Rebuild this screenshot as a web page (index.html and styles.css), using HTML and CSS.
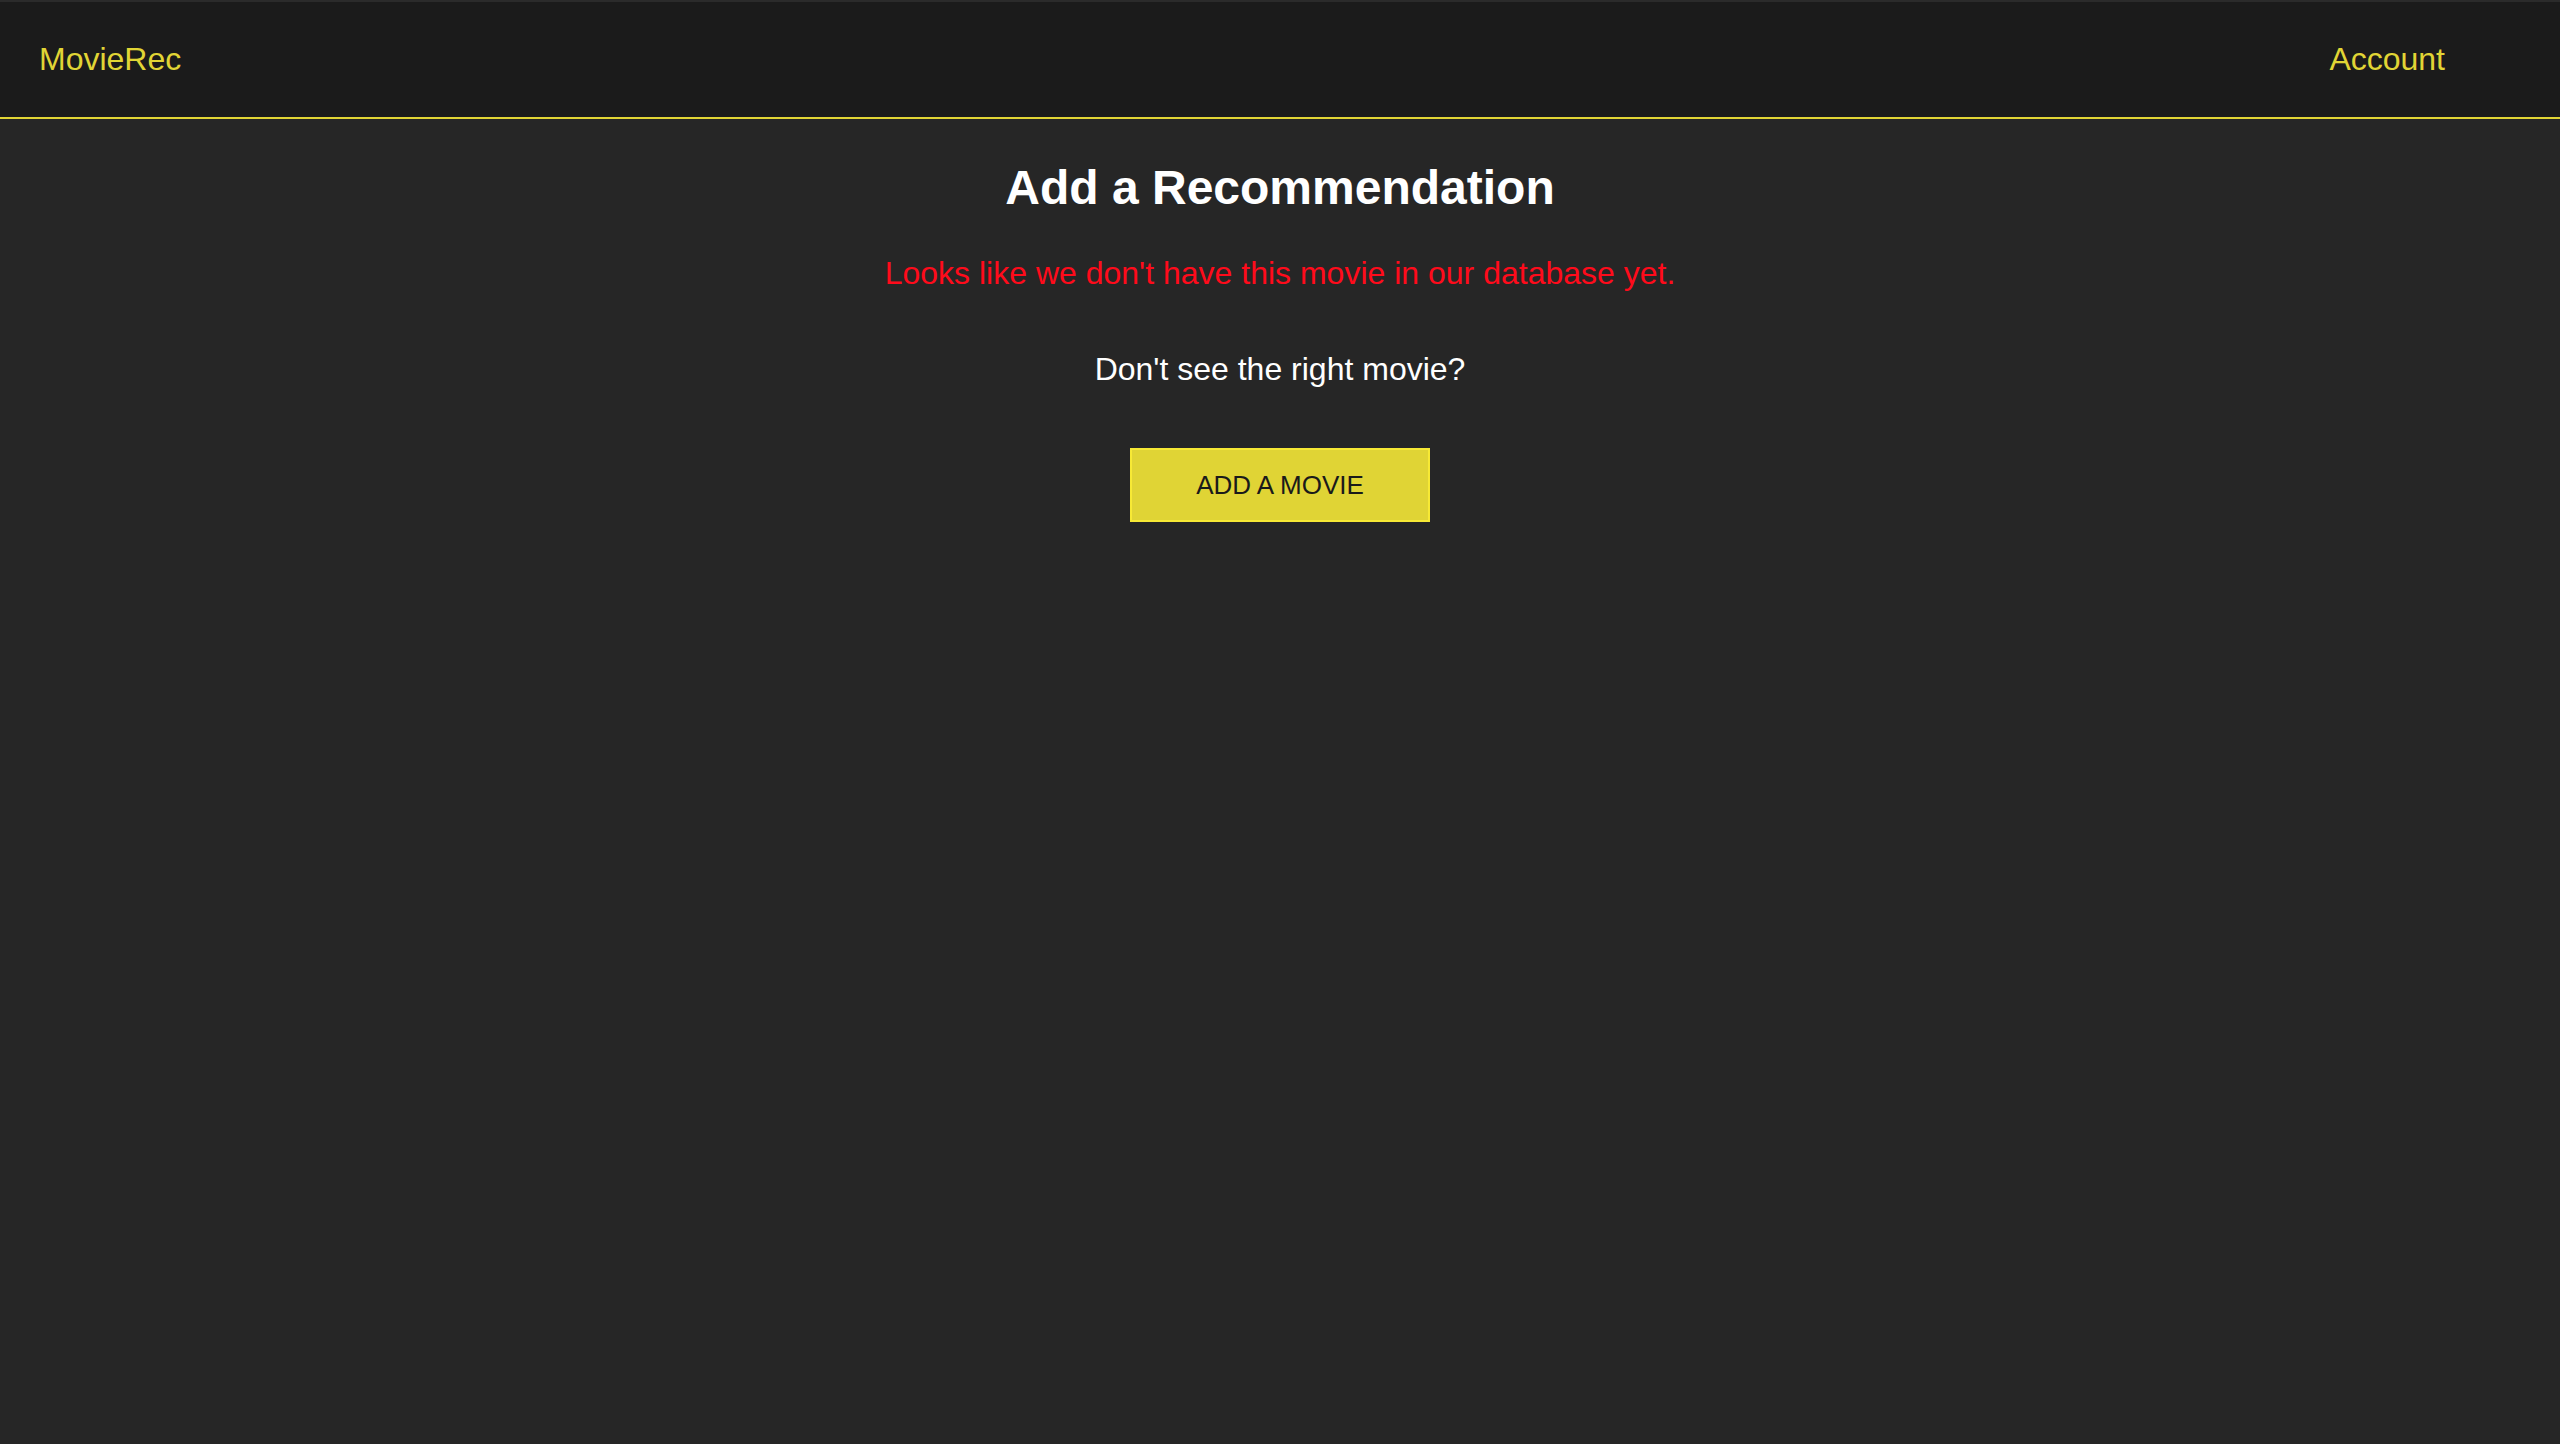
FILE: index.html
```html
<!DOCTYPE html>
<html lang="en">
<head>
<meta charset="utf-8">
<title>MovieRec</title>
<link rel="stylesheet" href="styles.css">
</head>
<body>
<header class="topbar">
  <a class="brand" href="#">MovieRec</a>
  <a class="nav-link" href="#">Account</a>
</header>
<main class="content">
  <h1 class="title">Add a Recommendation</h1>
  <p class="error">Looks like we don't have this movie in our database yet.</p>
  <p class="prompt">Don't see the right movie?</p>
  <button class="add-btn" type="button">ADD A MOVIE</button>
</main>
</body>
</html>
```

FILE: styles.css
```css
html, body {
  margin: 0;
  padding: 0;
  background: #262626;
  min-height: 100%;
}

body {
  font-family: "Liberation Sans", Arial, Helvetica, sans-serif;
  color: #ffffff;
  min-height: 1444px;
}

.topbar {
  display: flex;
  justify-content: space-between;
  align-items: center;
  height: 115px;
  padding: 0 115px 0 39px;
  background: #1b1b1b;
  border-top: 2px solid #2b2b2b;
  border-bottom: 2px solid #e1d535;
}

.brand,
.nav-link {
  color: #e1d535;
  text-decoration: none;
  font-size: 32px;
  line-height: 37px;
}

.content {
  display: flex;
  flex-direction: column;
  align-items: center;
  padding-top: 41px;
}

.title {
  margin: 0;
  font-size: 48px;
  font-weight: bold;
  line-height: 55px;
}

.error {
  margin: 40px 0 0;
  color: #ff0b1b;
  font-size: 32px;
  line-height: 37px;
}

.prompt {
  margin: 59px 0 0;
  font-size: 32px;
  line-height: 37px;
}

.add-btn {
  margin-top: 60px;
  width: 300px;
  height: 74px;
  padding: 0;
  background: #e0d435;
  border: 2px solid #f7e935;
  color: #1a1a1a;
  font-family: "Liberation Sans", Arial, Helvetica, sans-serif;
  font-size: 26px;
  line-height: 30px;
  cursor: pointer;
}
```
